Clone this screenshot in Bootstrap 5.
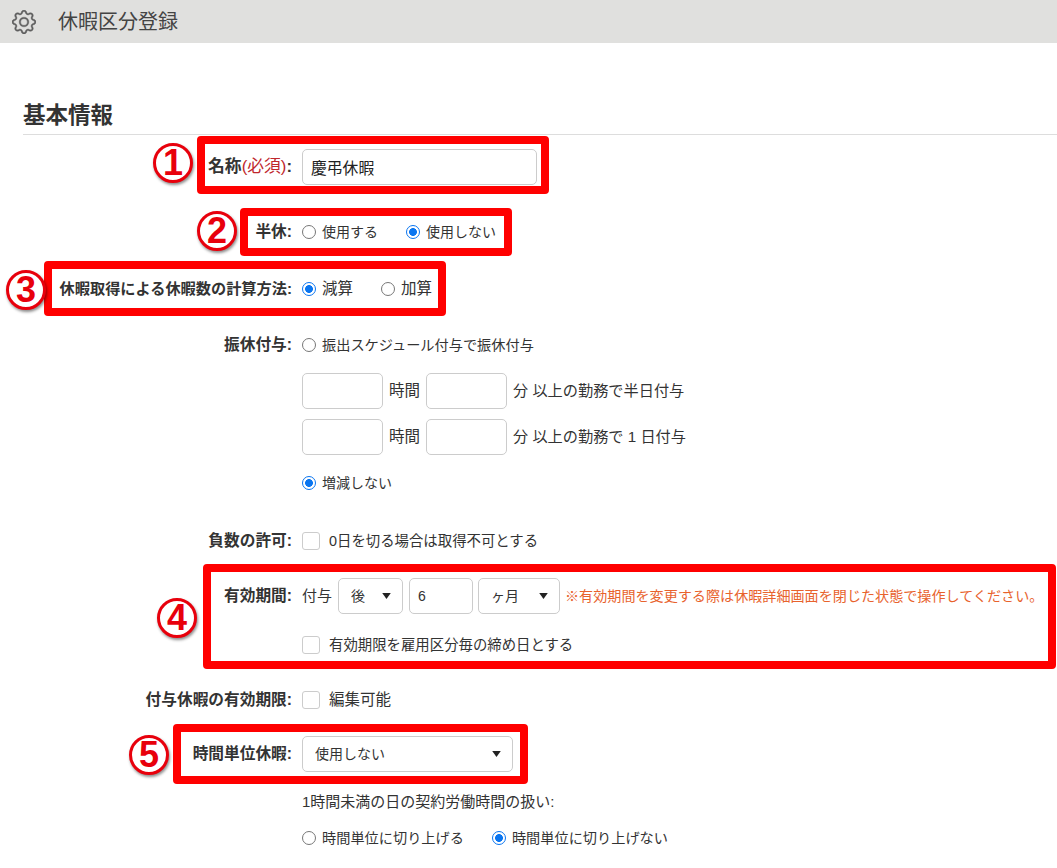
<!DOCTYPE html>
<html lang="ja">
<head>
<meta charset="utf-8">
<title>休暇区分登録</title>
<link rel="stylesheet" href="https://cdn.jsdelivr.net/npm/bootstrap@5.3.0/dist/css/bootstrap.min.css">
<style>
html,body{height:868px;overflow:hidden}
body{position:relative;background:#fff;color:#333;font-family:"Liberation Sans","Noto Sans CJK JP",sans-serif;font-size:14px;line-height:24px}
.topbar{height:43px;background:#e0e0de;padding-left:12px;color:#444}
.topbar svg{width:24px;height:24px;color:#5f5f5f;margin-right:22px;stroke:currentColor;stroke-width:.25}
.topbar span{font-size:20px}
.sect-head{margin:57px 0 0 23px;height:35px;line-height:32px;font-size:22.5px;font-weight:700;border-bottom:1px solid #ddd;color:#333}
.frow{display:flex;align-items:center;min-height:24px}
.flabel{width:292px;flex:none;text-align:right;font-size:15.7px;font-weight:700;color:#333;white-space:nowrap}
.flabel.narrow{font-size:15.2px}
.flabel.wide{font-size:16.8px}
.flabel em{font-style:normal;font-weight:400;color:#c0272d}
.fctl{margin-left:10px;display:flex;align-items:center;white-space:nowrap}
.s10{margin-top:10px}.s12{margin-top:12px}.s14{margin-top:14px}.s16{margin-top:16px}.s18{margin-top:18px}.s19{margin-top:19px}.s24{margin-top:24px}.s25{margin-top:25px}.s31{margin-top:31px}.s32{margin-top:32px}.s33{margin-top:33px}.s34{margin-top:34px}.s35{margin-top:35px}
.fld{height:36px;border:1px solid #ccc;border-radius:5px;font-size:14px;color:#333;padding:0 9px 0 8px;box-shadow:none;line-height:24px}
.fld.big{font-size:15.8px;color:#222}
.fld.form-select{padding:0 12px;background-image:url("data:image/svg+xml,%3Csvg xmlns='http://www.w3.org/2000/svg' viewBox='0 0 10 7'%3E%3Cpath d='M0 0h10L5 7z' fill='%23222'/%3E%3C/svg%3E");background-size:9px 6px;background-position:right 11px center}
.w235{width:235px}.w81{width:81px}.w65{width:65px}.w64{width:64px}.w82{width:82px}.w211{width:211px}
.fctl .form-check-input{margin:0;flex:none}
.fctl input[type=radio]{width:14px;height:14px;border-color:#777}
.fctl input[type=radio]:checked{border-color:#0a75f0;background-color:#fff;background-image:radial-gradient(circle,#0a75f0 0,#0a75f0 3.6px,#fff 4.2px)}
.fctl input[type=checkbox]{width:18px;height:18px;border-color:#ccc;border-radius:3px}
.rtxt{margin-left:6px}
.rwide{font-size:15.5px}
.rmid{font-size:14.2px}
.fctl .form-check-input.rnext{margin-left:28px}
.ctxt{margin-left:9px;font-size:14.4px}
.ctxt.lg{font-size:15.5px}
.unit1{margin:0 6px;font-size:15.5px}
.unit2{margin:0 0 0 6px;font-size:15.2px}
.unit0{margin-right:6px;font-size:15px}
.plain15{font-size:15px}
.tight6{margin-left:6px}
.tight5{margin-left:5px}
.warn{color:#e8622c;margin-left:5px;font-size:14.1px}
.redbox{position:absolute;border:8px solid #f00;border-radius:4px;pointer-events:none}
.b1{left:197px;top:136px;width:352px;height:58px}
.b2{left:240px;top:208px;width:272px;height:48px}
.b3{left:44px;top:261px;width:402px;height:55px}
.b4{left:203px;top:564px;width:853px;height:105px}
.b5{left:173px;top:724px;width:355px;height:60px}
.pin{position:absolute;width:40px;height:40px;border:3px solid #e8000c;border-radius:50%;background:#fff;box-shadow:1px 2px 3px rgba(0,0,0,.45);color:#e8000c;font:700 36px/34px "Liberation Sans",sans-serif;text-align:center}
.p1{left:153px;top:143px}
.p2{left:197px;top:211px}
.p3{left:6px;top:270px}
.p4{left:157px;top:598px}
.p5{left:129px;top:735px}
</style>
</head>
<body>
<div class="topbar d-flex align-items-center">
  <svg viewBox="0 0 16 16" fill="currentColor" aria-hidden="true"><path d="M8 4.754a3.246 3.246 0 1 0 0 6.492 3.246 3.246 0 0 0 0-6.492zM5.754 8a2.246 2.246 0 1 1 4.492 0 2.246 2.246 0 0 1-4.492 0z"/><path d="M9.796 1.343c-.527-1.79-3.065-1.79-3.592 0l-.094.319a.873.873 0 0 1-1.255.52l-.292-.16c-1.64-.892-3.433.902-2.54 2.541l.159.292a.873.873 0 0 1-.52 1.255l-.319.094c-1.79.527-1.79 3.065 0 3.592l.319.094a.873.873 0 0 1 .52 1.255l-.16.292c-.892 1.64.901 3.434 2.541 2.54l.292-.159a.873.873 0 0 1 1.255.52l.094.319c.527 1.79 3.065 1.79 3.592 0l.094-.319a.873.873 0 0 1 1.255-.52l.292.16c1.64.893 3.434-.902 2.54-2.541l-.159-.292a.873.873 0 0 1 .52-1.255l.319-.094c1.79-.527 1.79-3.065 0-3.592l-.319-.094a.873.873 0 0 1-.52-1.255l.16-.292c.893-1.64-.902-3.433-2.541-2.54l-.292.159a.873.873 0 0 1-1.255-.52l-.094-.319zm-2.633.283c.246-.835 1.428-.835 1.674 0l.094.319a1.873 1.873 0 0 0 2.693 1.115l.291-.16c.764-.415 1.6.42 1.184 1.185l-.159.292a1.873 1.873 0 0 0 1.116 2.692l.318.094c.835.246.835 1.428 0 1.674l-.319.094a1.873 1.873 0 0 0-1.115 2.693l.16.291c.415.764-.42 1.6-1.185 1.184l-.291-.159a1.873 1.873 0 0 0-2.693 1.116l-.094.318c-.246.835-1.428.835-1.674 0l-.094-.319a1.873 1.873 0 0 0-2.692-1.115l-.292.16c-.764.415-1.6-.42-1.184-1.185l.159-.291A1.873 1.873 0 0 0 1.945 8.93l-.319-.094c-.835-.246-.835-1.428 0-1.674l.319-.094A1.873 1.873 0 0 0 3.06 4.377l-.16-.292c-.415-.764.42-1.6 1.185-1.184l.292.159a1.873 1.873 0 0 0 2.692-1.115l.094-.319z"/></svg>
  <span>休暇区分登録</span>
</div>

<div class="sect-head">基本情報</div>

<form>
  <div class="frow s14">
    <div class="flabel wide">名称<em>(必須)</em>:</div>
    <div class="fctl"><input class="form-control fld big w235" value="慶弔休暇"></div>
  </div>

  <div class="frow s35">
    <div class="flabel">半休:</div>
    <div class="fctl">
      <input class="form-check-input" type="radio" name="hk"><span class="rtxt">使用する</span>
      <input class="form-check-input rnext" type="radio" name="hk" checked><span class="rtxt">使用しない</span>
    </div>
  </div>

  <div class="frow s33">
    <div class="flabel narrow">休暇取得による休暇数の計算方法:</div>
    <div class="fctl">
      <input class="form-check-input" type="radio" name="kk" checked><span class="rtxt rwide">減算</span>
      <input class="form-check-input rnext" type="radio" name="kk"><span class="rtxt rwide">加算</span>
    </div>
  </div>

  <div class="frow s32">
    <div class="flabel">振休付与:</div>
    <div class="fctl"><input class="form-check-input" type="radio" name="fk"><span class="rtxt rmid">振出スケジュール付与で振休付与</span></div>
  </div>
  <div class="frow s16">
    <div class="flabel"></div>
    <div class="fctl"><input class="form-control fld w81"><span class="unit1">時間</span><input class="form-control fld w81"><span class="unit2">分 以上の勤務で半日付与</span></div>
  </div>
  <div class="frow s10">
    <div class="flabel"></div>
    <div class="fctl"><input class="form-control fld w81"><span class="unit1">時間</span><input class="form-control fld w81"><span class="unit2">分 以上の勤務で 1 日付与</span></div>
  </div>
  <div class="frow s16">
    <div class="flabel"></div>
    <div class="fctl"><input class="form-check-input" type="radio" name="fk" checked><span class="rtxt">増減しない</span></div>
  </div>

  <div class="frow s34">
    <div class="flabel">負数の許可:</div>
    <div class="fctl"><input class="form-check-input" type="checkbox"><span class="ctxt">0日を切る場合は取得不可とする</span></div>
  </div>

  <div class="frow s25">
    <div class="flabel">有効期間:</div>
    <div class="fctl">
      <span class="unit0">付与</span>
      <select class="form-select fld w65"><option>後</option></select>
      <input class="form-control fld w64 tight6" value="6">
      <select class="form-select fld w82 tight5"><option>ヶ月</option></select>
      <span class="warn">※有効期間を変更する際は休暇詳細画面を閉じた状態で操作してください。</span>
    </div>
  </div>
  <div class="frow s19">
    <div class="flabel"></div>
    <div class="fctl"><input class="form-check-input" type="checkbox"><span class="ctxt">有効期限を雇用区分毎の締め日とする</span></div>
  </div>

  <div class="frow s31">
    <div class="flabel">付与休暇の有効期限:</div>
    <div class="fctl"><input class="form-check-input" type="checkbox"><span class="ctxt lg">編集可能</span></div>
  </div>

  <div class="frow s24">
    <div class="flabel">時間単位休暇:</div>
    <div class="fctl"><select class="form-select fld w211"><option>使用しない</option></select></div>
  </div>
  <div class="frow s18">
    <div class="flabel"></div>
    <div class="fctl plain15">1時間未満の日の契約労働時間の扱い:</div>
  </div>
  <div class="frow s12">
    <div class="flabel"></div>
    <div class="fctl">
      <input class="form-check-input" type="radio" name="jk"><span class="rtxt rmid">時間単位に切り上げる</span>
      <input class="form-check-input rnext" type="radio" name="jk" checked><span class="rtxt rmid">時間単位に切り上げない</span>
    </div>
  </div>
</form>

<div class="redbox b1"></div><div class="redbox b2"></div><div class="redbox b3"></div><div class="redbox b4"></div><div class="redbox b5"></div>
<div class="pin p1">1</div><div class="pin p2">2</div><div class="pin p3">3</div><div class="pin p4">4</div><div class="pin p5">5</div>

<script src="https://cdn.jsdelivr.net/npm/bootstrap@5.3.0/dist/js/bootstrap.bundle.min.js"></script>
</body>
</html>
